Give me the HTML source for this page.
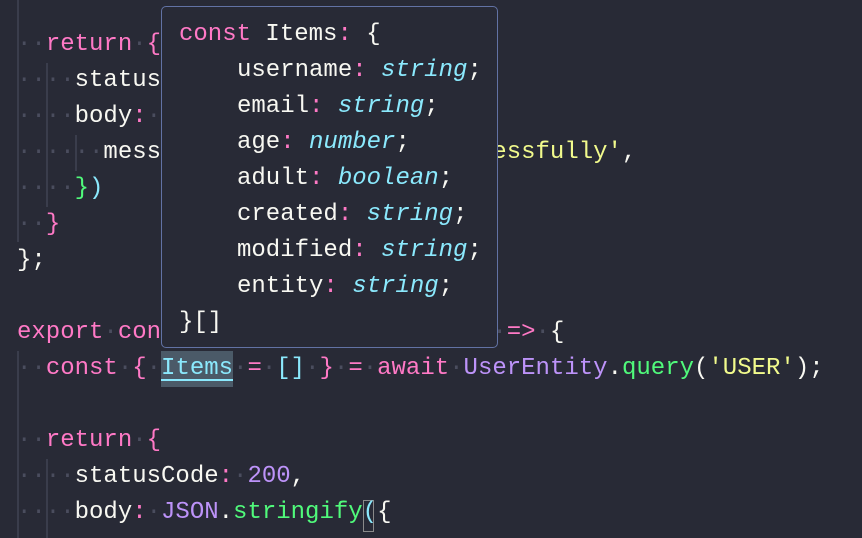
<!DOCTYPE html>
<html><head><meta charset="utf-8"><style>
html,body{margin:0;padding:0;width:862px;height:536px;overflow:hidden;background:#282a36;}
.l{position:absolute;left:17px;height:36px;line-height:36px;font-family:"Liberation Mono",monospace;font-size:24px;white-space:pre;color:#f8f8f2;}
.d{color:#4a4d5e}.k{color:#ff79c6}.p{color:#bd93f9}.g{color:#50fa7b}.y{color:#f1fa8c}.c{color:#8be9fd}.ci{color:#8be9fd;font-style:italic}
.ig{position:absolute;width:2px;background:#3a3d4c}
.tip{position:absolute;left:161px;top:6px;width:335px;height:340px;border:1.5px solid #6272a4;border-radius:5px;background:#282a36;}
.t{position:absolute;height:36px;line-height:36px;font-family:"Liberation Mono",monospace;font-size:24px;white-space:pre;color:#f8f8f2;}
</style></head><body>
<div class="ig" style="left:17px;top:0;height:242px"></div>
<div class="ig" style="left:46px;top:63px;height:144px"></div>
<div class="ig" style="left:75px;top:135px;height:36px"></div>
<div class="ig" style="left:17px;top:351px;height:187px"></div>
<div class="ig" style="left:46px;top:459px;height:79px"></div>

<div class="l" style="top:27px"><span class="d">··</span><span class="k">return</span><span class="d">·</span><span class="k">{</span></div>
<div class="l" style="top:63px"><span class="d">····</span>statusCode<span class="k">:</span><span class="d">·</span><span class="p">200</span>,</div>
<div class="l" style="top:99px"><span class="d">····</span>body<span class="k">:</span><span class="d">·</span><span class="p">JSON</span>.<span class="g">stringify</span>({</div>
<div class="l" style="top:135px"><span class="d">······</span>message<span class="k">:</span><span class="d">·</span><span class="y">'Items·listed·successfully'</span>,</div>
<div class="l" style="top:171px"><span class="d">····</span><span class="g">}</span><span class="c">)</span></div>
<div class="l" style="top:207px"><span class="d">··</span><span class="k">}</span></div>
<div class="l" style="top:243px">};</div>
<div class="l" style="top:315px"><span class="k">export</span><span class="d">·</span><span class="k">const</span><span class="d">·</span><span class="g">listUsers</span><span class="d">·</span><span class="k">=</span><span class="d">·</span><span class="k">async</span><span class="d">·</span>()<span class="d">·</span><span class="k">=&gt;</span><span class="d">·</span>{</div>
<div style="position:absolute;left:161px;top:351px;width:72px;height:36px;background:#4b5a68"></div>
<div style="position:absolute;left:161px;top:379px;width:72px;height:2px;background:#8be9fd"></div>
<div class="l" style="top:351px"><span class="d">··</span><span class="k">const</span><span class="d">·</span><span class="k">{</span><span class="d">·</span><span class="c">Items</span><span class="d">·</span><span class="k">=</span><span class="d">·</span><span class="c">[]</span><span class="d">·</span><span class="k">}</span><span class="d">·</span><span class="k">=</span><span class="d">·</span><span class="k">await</span><span class="d">·</span><span class="p">UserEntity</span>.<span class="g">query</span>(<span class="y">'USER'</span>);</div>
<div class="l" style="top:423px"><span class="d">··</span><span class="k">return</span><span class="d">·</span><span class="k">{</span></div>
<div class="l" style="top:459px"><span class="d">····</span>statusCode<span class="k">:</span><span class="d">·</span><span class="p">200</span>,</div>
<div style="position:absolute;left:363px;top:500px;width:11px;height:32px;border:1.5px solid #8a8a8a;box-sizing:border-box"></div>
<div class="l" style="top:495px"><span class="d">····</span>body<span class="k">:</span><span class="d">·</span><span class="p">JSON</span>.<span class="g">stringify</span><span class="c">(</span>{</div>

<div class="tip"></div>
<div class="t" style="left:179px;top:17px"><span class="k">const</span> Items<span class="k">:</span> {</div>
<div class="t" style="left:237px;top:53px">username<span class="k">:</span> <span class="ci">string</span>;</div>
<div class="t" style="left:237px;top:89px">email<span class="k">:</span> <span class="ci">string</span>;</div>
<div class="t" style="left:237px;top:125px">age<span class="k">:</span> <span class="ci">number</span>;</div>
<div class="t" style="left:237px;top:161px">adult<span class="k">:</span> <span class="ci">boolean</span>;</div>
<div class="t" style="left:237px;top:197px">created<span class="k">:</span> <span class="ci">string</span>;</div>
<div class="t" style="left:237px;top:233px">modified<span class="k">:</span> <span class="ci">string</span>;</div>
<div class="t" style="left:237px;top:269px">entity<span class="k">:</span> <span class="ci">string</span>;</div>
<div class="t" style="left:179px;top:305px">}[]</div>
</body></html>
